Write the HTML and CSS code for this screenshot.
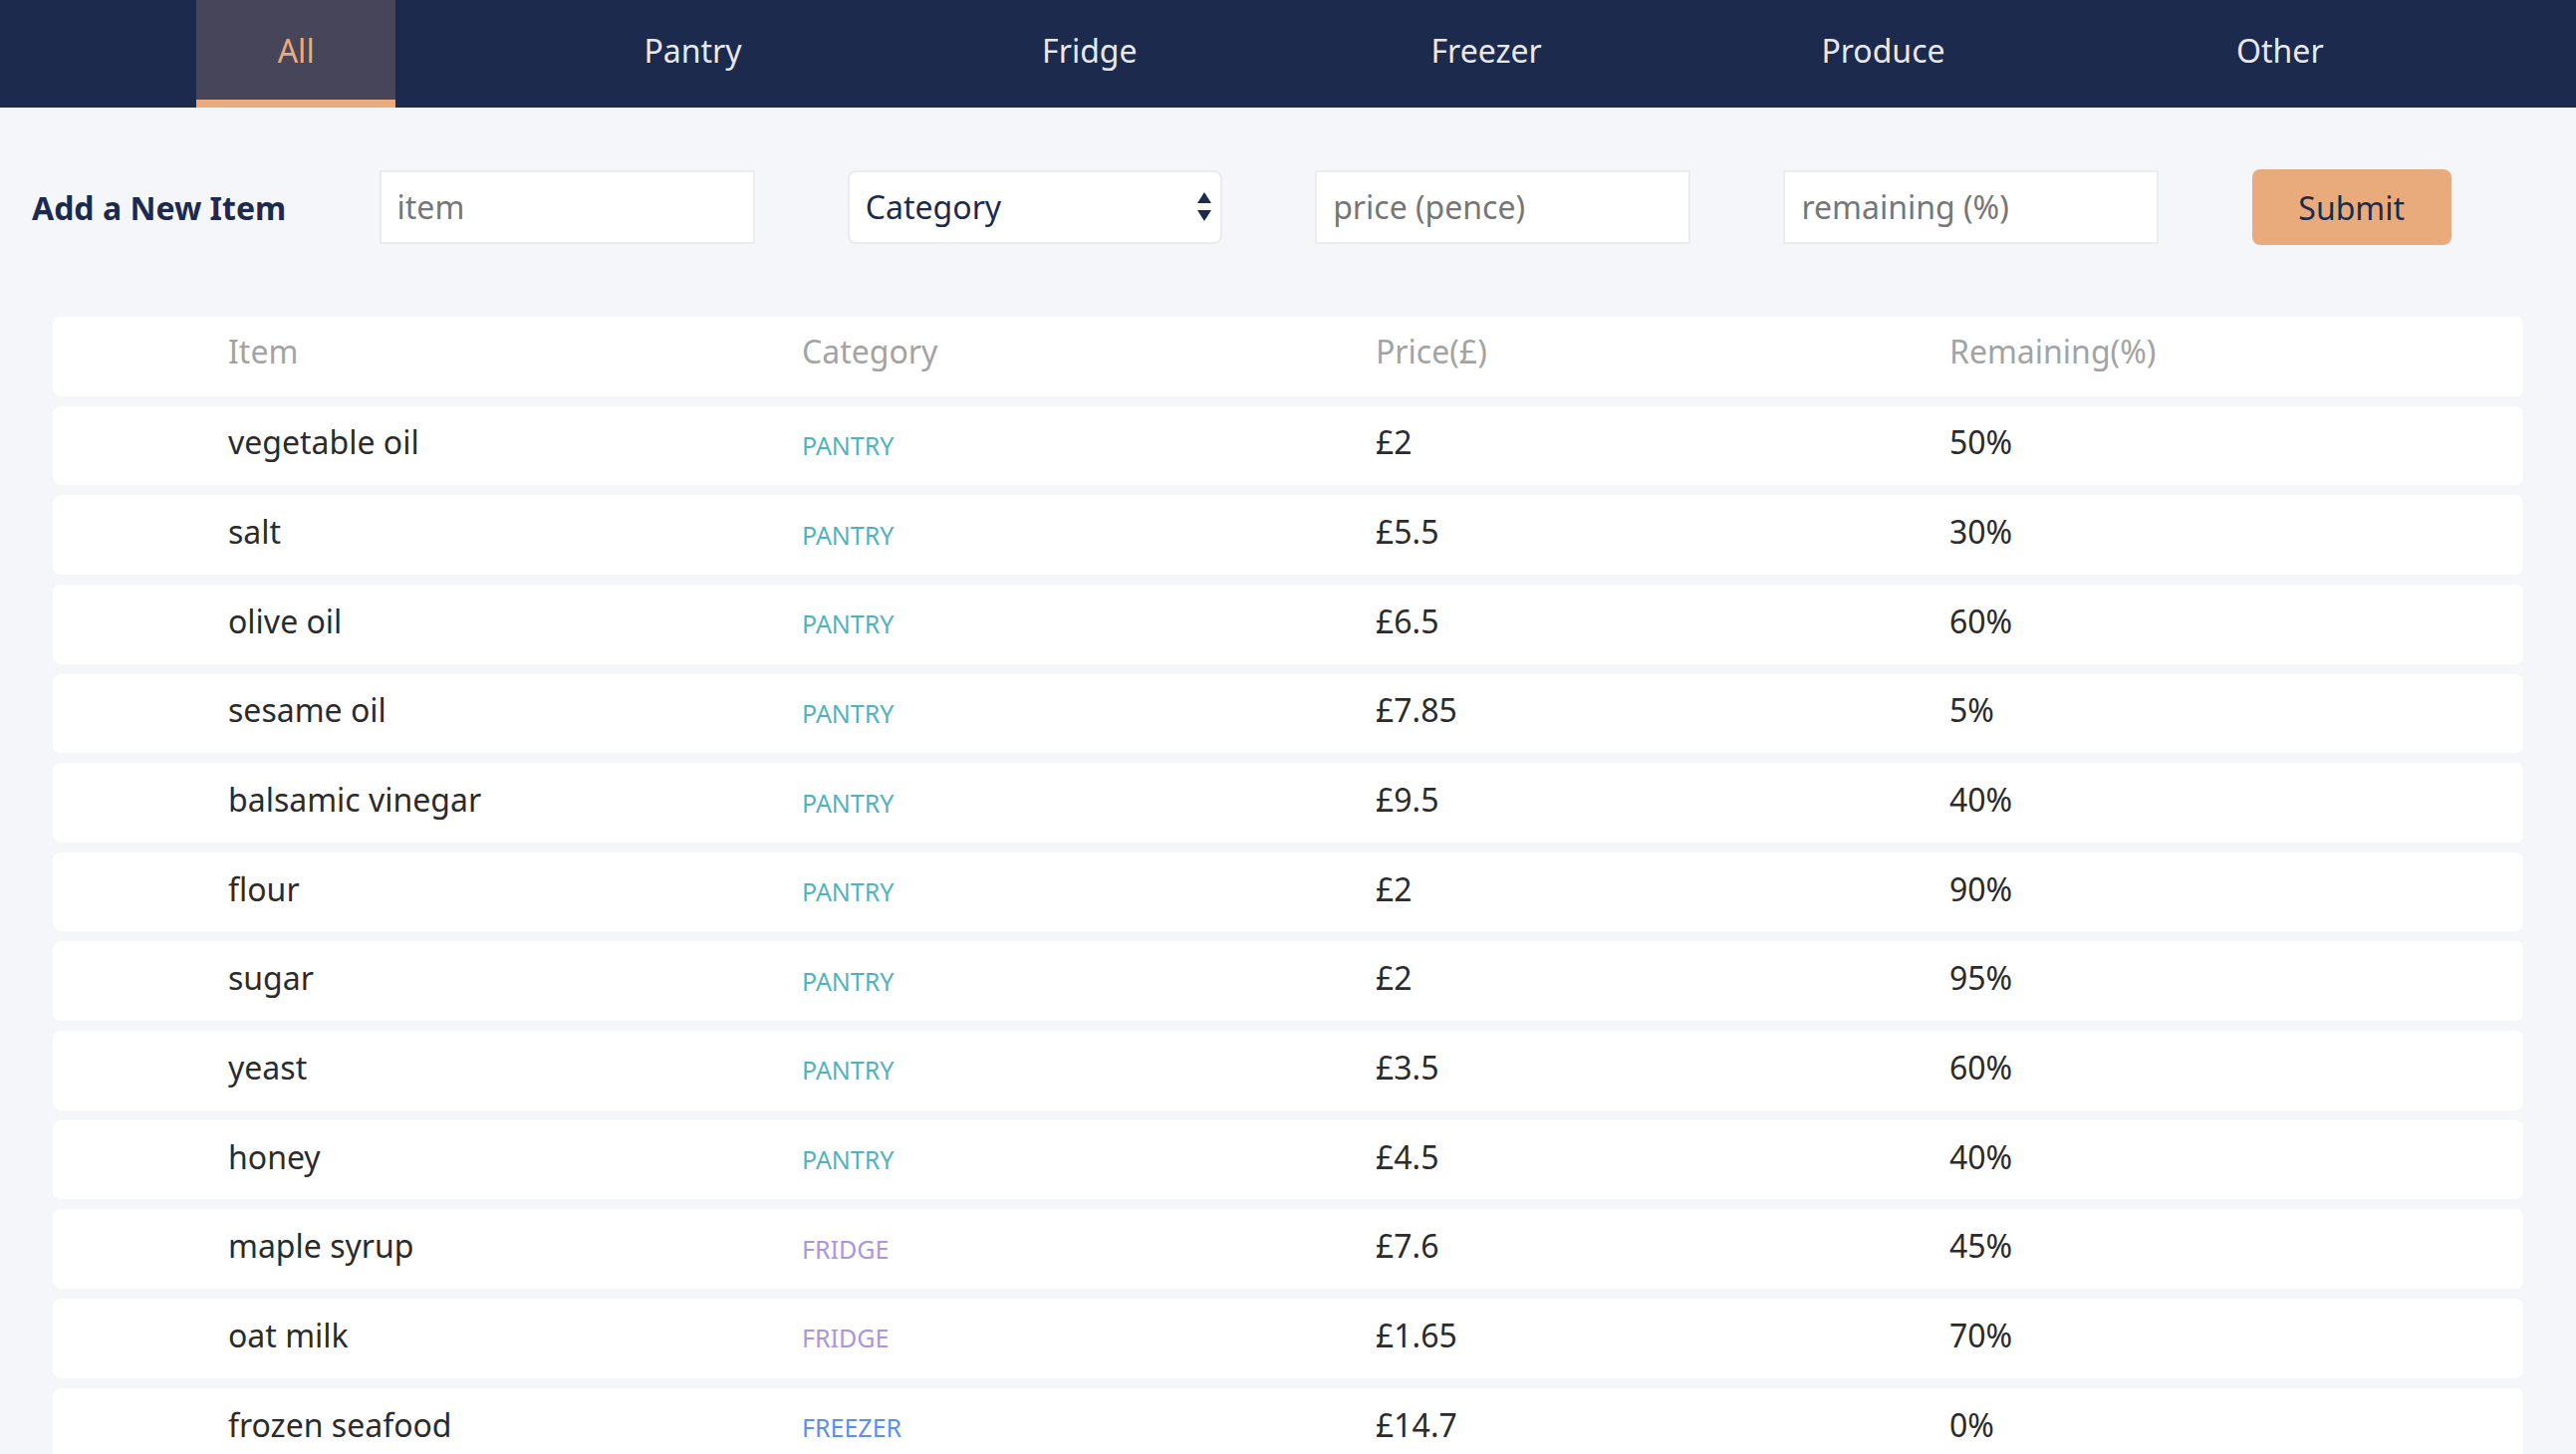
FILE: index.html
```html
<!DOCTYPE html>
<html lang="en">
<head>
<meta charset="utf-8">
<title>Pantry Tracker</title>
<link rel="stylesheet" href="styles.css">
</head>
<body>
<nav class="tabs">
  <div class="tab-slot"><a class="tab active" href="#">All</a></div>
  <div class="tab-slot"><a class="tab" href="#">Pantry</a></div>
  <div class="tab-slot"><a class="tab" href="#">Fridge</a></div>
  <div class="tab-slot"><a class="tab" href="#">Freezer</a></div>
  <div class="tab-slot"><a class="tab" href="#">Produce</a></div>
  <div class="tab-slot"><a class="tab" href="#">Other</a></div>
</nav>

<form class="add-form">
  <h2 class="add-title">Add a New Item</h2>
  <input class="field" type="text" placeholder="item">
  <div class="select-wrap">
    <select class="field select">
      <option>Category</option>
      <option>Pantry</option>
      <option>Fridge</option>
      <option>Freezer</option>
      <option>Produce</option>
      <option>Other</option>
    </select>
    <svg class="select-arrows" width="16" height="30" viewBox="0 0 16 30"><path d="M8 0 L15 11 L1 11 Z" fill="#1c2a4d"/><path d="M1 18 L15 18 L8 29 Z" fill="#1c2a4d"/></svg>
  </div>
  <input class="field" type="text" placeholder="price (pence)">
  <input class="field" type="text" placeholder="remaining (%)">
  <button class="submit" type="button">Submit</button>
</form>

<div class="table">
  <div class="row head">
    <div>Item</div><div>Category</div><div>Price(£)</div><div>Remaining(%)</div>
  </div>
  <div class="row"><div class="name">vegetable oil</div><div class="cat pantry">Pantry</div><div>£2</div><div>50%</div></div>
  <div class="row"><div class="name">salt</div><div class="cat pantry">Pantry</div><div>£5.5</div><div>30%</div></div>
  <div class="row"><div class="name">olive oil</div><div class="cat pantry">Pantry</div><div>£6.5</div><div>60%</div></div>
  <div class="row"><div class="name">sesame oil</div><div class="cat pantry">Pantry</div><div>£7.85</div><div>5%</div></div>
  <div class="row"><div class="name">balsamic vinegar</div><div class="cat pantry">Pantry</div><div>£9.5</div><div>40%</div></div>
  <div class="row"><div class="name">flour</div><div class="cat pantry">Pantry</div><div>£2</div><div>90%</div></div>
  <div class="row"><div class="name">sugar</div><div class="cat pantry">Pantry</div><div>£2</div><div>95%</div></div>
  <div class="row"><div class="name">yeast</div><div class="cat pantry">Pantry</div><div>£3.5</div><div>60%</div></div>
  <div class="row"><div class="name">honey</div><div class="cat pantry">Pantry</div><div>£4.5</div><div>40%</div></div>
  <div class="row"><div class="name">maple syrup</div><div class="cat fridge">Fridge</div><div>£7.6</div><div>45%</div></div>
  <div class="row"><div class="name">oat milk</div><div class="cat fridge">Fridge</div><div>£1.65</div><div>70%</div></div>
  <div class="row"><div class="name">frozen seafood</div><div class="cat freezer">Freezer</div><div>£14.7</div><div>0%</div></div>
</div>
</body>
</html>
```

FILE: styles.css
```css
* { box-sizing: border-box; }

html, body {
  margin: 0;
  padding: 0;
  background: #f5f6fa;
  font-family: "Noto Sans", "Open Sans", sans-serif;
  color: #2b2b2b;
}

.tabs {
  display: grid;
  grid-template-columns: repeat(6, 1fr);
  padding: 0 98px;
  height: 108px;
  background: #1c2a4d;
}

.tab-slot {
  display: flex;
  justify-content: center;
}

.tab {
  width: 200px;
  height: 108px;
  display: flex;
  align-items: center;
  justify-content: center;
  font-size: 32px;
  color: #e8e8ec;
  text-decoration: none;
  border-bottom: 8px solid transparent;
}

.tab.active {
  background: #47455a;
  color: #e9ab7c;
  border-bottom-color: #e9ab7c;
}

.add-form {
  display: flex;
  align-items: center;
  gap: 93.3px;
  padding: 62px 0 0 32px;
  margin: 0;
}

.add-title {
  flex: 0 0 254px;
  margin: 0;
  font-size: 32px;
  font-weight: 700;
  color: #1c2a4d;
  white-space: nowrap;
}

.field {
  flex: 0 0 377px;
  width: 377px;
  height: 74px;
  border: 2px solid #ececec;
  background: #fff;
  font-family: inherit;
  font-size: 32px;
  color: #1c2a4d;
  padding: 0 16px 2px;
  border-radius: 0;
  outline: none;
}

.field::placeholder {
  color: #767676;
}

.select-wrap {
  position: relative;
  flex: 0 0 376px;
  width: 376px;
  height: 74px;
}

.select {
  width: 100%;
  appearance: none;
  -webkit-appearance: none;
  border-radius: 8px;
  color: #1c2a4d;
}

.select-arrows {
  position: absolute;
  right: 10px;
  top: 22px;
  pointer-events: none;
}

.submit {
  flex: 0 0 200px;
  height: 76px;
  border: none;
  border-radius: 8px;
  background: #e9ab7c;
  color: #1c2a4d;
  font-family: inherit;
  font-size: 32px;
}

.table {
  margin: 72px 53px 0;
  display: flex;
  flex-direction: column;
  gap: 10px;
}

.row {
  display: grid;
  grid-template-columns: repeat(4, 576px);
  align-items: center;
  height: 79.65px;
  padding-left: 176px;
  background: #fff;
  border-radius: 8px;
  font-size: 32px;
  color: #2b2b2b;
}

.row > div {
  padding-bottom: 7px;
}

.row.head {
  color: #a3a3a3;
}

.row.head > div {
  padding-bottom: 11px;
}

.row > .cat {
  font-size: 25px;
  text-transform: uppercase;
  padding-bottom: 1px;
}

.cat.pantry { color: #4fb3bf; }
.cat.fridge { color: #a895e4; }
.cat.freezer { color: #5b8ef5; }
```
